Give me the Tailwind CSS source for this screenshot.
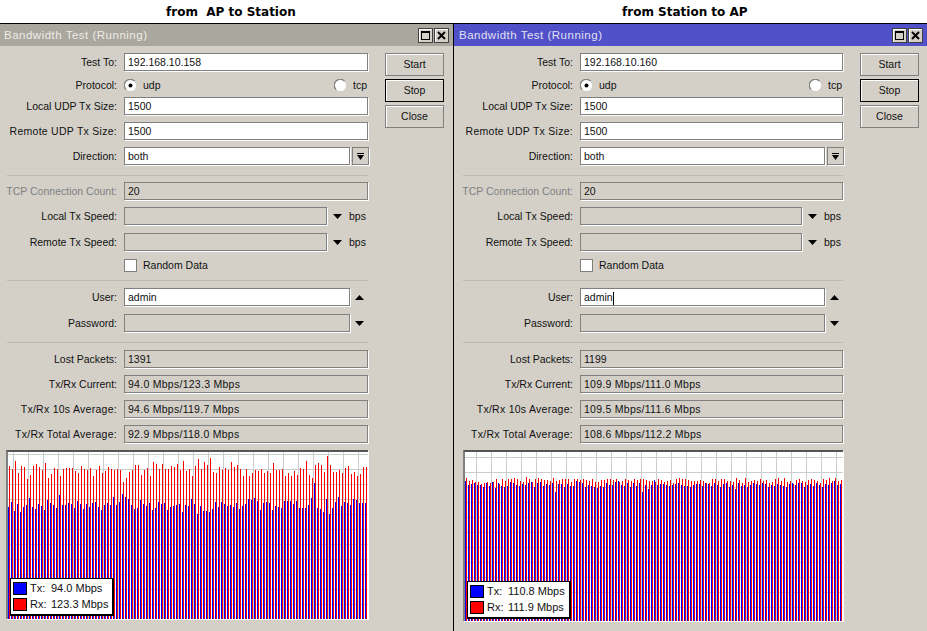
<!DOCTYPE html>
<html lang="en">
<head>
    <meta charset="UTF-8">
    <title>Bandwidth Test</title>
    <script src="https://cdn.jsdelivr.net/npm/@tailwindcss/browser@4"></script>
</head>
<body class="bg-white">
    <div class="w-[927px] h-[631px] overflow-hidden font-['Liberation_Sans',sans-serif] text-[10.5px] text-[#111]">
        <div class="flex h-[23px] items-center pt-px font-['DejaVu_Sans',sans-serif] font-bold text-[12px] text-black">
            <div class="w-[454px] pl-[166px]">from&nbsp; AP to Station</div>
            <div class="pl-[168px]">from Station to AP</div>
        </div>
        <div class="flex h-[608px] border-t border-black bg-[#d4d0c8]">
            <div id="win-left" class="w-[454px] border-r border-black"></div>
            <div id="win-right" class="w-[473px]"></div>
        </div>
    </div>

    <script>
        const down = '<svg class="w-[9px] h-[5px]" viewBox="0 0 9 5"><polygon points="0,0 9,0 4.5,5" fill="#000"/></svg>';
        const up = '<svg class="w-[9px] h-[5px]" viewBox="0 0 9 5"><polygon points="0,5 9,5 4.5,0" fill="#000"/></svg>';

        function radio(on) {
            return `<svg class="w-[13px] h-[13px] shrink-0" viewBox="0 0 13 13">
                <circle cx="6.5" cy="6.5" r="5.5" fill="#fff"/>
                <path d="M2 10.5A5.7 5.7 0 0 1 10.5 2" fill="none" stroke="#808080" stroke-width="1.2"/>
                ${on ? '<circle cx="6.5" cy="6.5" r="2" fill="#000"/>' : ''}
            </svg>`;
        }

        function label(text, w, muted) {
            return `<div class="${w} mr-[7px] pt-[2px] shrink-0 text-right ${muted ? 'text-[#808080]' : ''}">${text}</div>`;
        }

        function wide(text) {
            return `<span class="tracking-[0.27px]">${text}</span>`;
        }

        function input(value, caret) {
            return `<div class="flex-1 h-[18px] flex items-center pl-[3px] pt-[2px] bg-white border border-[#808080] shadow-[1px_1px_0_#fff]">${value}${caret ? '<span class="w-px h-[13px] bg-black"></span>' : ''}</div>`;
        }

        function box(value) {
            return `<div class="flex-1 h-[18px] flex items-center pl-[3px] pt-[2px] border border-[#808080] shadow-[1px_1px_0_#fff]">${value}</div>`;
        }

        function divider(ml, mt, mb) {
            return `<div class="h-px bg-[#bdbab2] ${ml} ${mt} ${mb}"></div>`;
        }

        function titleButton(inner) {
            return `<div class="w-[15px] h-[15px] flex items-center justify-center bg-[#d4d0c8] border border-[#404040] shadow-[inset_1px_1px_0_#fff]">${inner}</div>`;
        }

        function button(text, isDefault) {
            return `<div class="h-[23px] flex items-center justify-center ${isDefault ? 'border border-black' : 'border border-[#808080]'} shadow-[inset_1px_1px_0_#fff]">${text}</div>`;
        }

        function windowHtml(o) {
            const l = o.labelWidth;
            return `
            <div class="h-[22px] flex items-center justify-between ${o.titleClass}">
                <span class="pt-[2px] text-[11.5px] tracking-[0.5px]">Bandwidth Test (Running)</span>
                <div class="flex gap-[1px] mr-[4px]">
                    ${titleButton('<span class="block w-[9px] h-[9px] border border-black border-t-2"></span>')}
                    ${titleButton('<svg class="w-[9px] h-[9px]" viewBox="0 0 9 9"><path d="M1 1l7 7M8 1l-7 7" stroke="#000" stroke-width="2"/></svg>')}
                </div>
            </div>
            <div class="flex pt-[7px]">
                <div class="flex-1">
                    <div class="flex items-center h-[18px]">${label('Test To:', l)}${input(o.ip)}</div>
                    <div class="flex items-center h-[18px] mt-[5px]">${label('Protocol:', l)}
                        ${radio(true)}<span class="ml-[6px] pt-[2px]">udp</span><span class="flex-1"></span>${radio(false)}<span class="ml-[6px] mr-[1px] pt-[2px]">tcp</span>
                    </div>
                    <div class="flex items-center h-[18px] mt-[3px]">${label('Local UDP Tx Size:', l)}${input('1500')}</div>
                    <div class="flex items-center h-[18px] mt-[7px]">${label(wide('Remote UDP Tx Size:'), l)}${input('1500')}</div>
                    <div class="flex items-center h-[18px] mt-[7px]">${label('Direction:', l)}${input('both')}
                        <div class="w-[17px] h-[18px] ml-[2px] mr-[-1px] flex flex-col items-center justify-center gap-px border border-[#808080] shadow-[1px_1px_0_#fff]">
                            <span class="block w-[7px] h-px bg-black"></span>
                            <svg class="w-[7px] h-[5px]" viewBox="0 0 7 5"><polygon points="0,0 7,0 3.5,5" fill="#000"/></svg>
                        </div>
                    </div>
                    ${divider(o.hrMargin, 'mt-[10px]', 'mb-[6px]')}
                    <div class="flex items-center h-[18px]">${label('TCP Connection Count:', l, true)}${box('20')}</div>
                    <div class="flex items-center h-[18px] mt-[7px]">${label('Local Tx Speed:', l)}${box('')}
                        <div class="w-[20px] flex justify-center">${down}</div><span class="w-[21px] pl-[2px] pt-[2px]">bps</span>
                    </div>
                    <div class="flex items-center h-[18px] mt-[8px]">${label('Remote Tx Speed:', l)}${box('')}
                        <div class="w-[20px] flex justify-center">${down}</div><span class="w-[21px] pl-[2px] pt-[2px]">bps</span>
                    </div>
                    <div class="flex items-center h-[18px] mt-[5px]">${label('', l)}
                        <span class="w-[13px] h-[13px] bg-white border border-[#808080]"></span><span class="ml-[6px] pt-[2px]">Random Data</span>
                    </div>
                    ${divider(o.hrMargin, 'mt-[6px]', 'mb-[7px]')}
                    <div class="flex items-center h-[18px]">${label('User:', l)}${input('admin', o.caret)}
                        <div class="w-[18px] flex justify-center">${up}</div>
                    </div>
                    <div class="flex items-center h-[18px] mt-[8px]">${label('Password:', l)}${box('')}
                        <div class="w-[18px] flex justify-center">${down}</div>
                    </div>
                    ${divider(o.hrMargin, 'mt-[10px]', 'mb-[7px]')}
                    <div class="flex items-center h-[18px]">${label('Lost Packets:', l)}${box(o.lost)}</div>
                    <div class="flex items-center h-[18px] mt-[7px]">${label('Tx/Rx Current:', l)}${box(wide(o.current))}</div>
                    <div class="flex items-center h-[18px] mt-[7px]">${label(wide('Tx/Rx 10s Average:'), l)}${box(wide(o.avg10))}</div>
                    <div class="flex items-center h-[18px] mt-[7px]">${label(wide('Tx/Rx Total Average:'), l)}${box(wide(o.avgTotal))}</div>
                    <div class="relative mt-[7px] ${o.chartClass} border-t-2 border-l-2 border-t-[#555] border-l-[#808080] bg-white shadow-[1px_1px_0_#fff]">
                        <svg id="${o.chartId}" class="block w-full h-full" shape-rendering="crispEdges"></svg>
                        <div class="absolute ${o.legendClass} w-[104px] h-[38px] flex flex-col justify-center gap-[3px] pl-[2px] bg-white border border-black border-r-2 border-b-2 text-[11px]">
                            <div class="flex items-center h-[13px]"><span class="w-[14px] h-[13px] bg-[#0000ff] border border-black mr-[3px]"></span><span class="w-[21px]">Tx:</span>${o.tx}</div>
                            <div class="flex items-center h-[13px]"><span class="w-[14px] h-[13px] bg-[#ff0000] border border-black mr-[3px]"></span><span class="w-[21px]">Rx:</span>${o.rx}</div>
                        </div>
                    </div>
                </div>
                <div class="w-[59px] ml-[17px] ${o.buttonsMargin} flex flex-col gap-[3px]">
                    ${button('Start')}${button('Stop', true)}${button('Close')}
                </div>
            </div>`;
        }

        document.getElementById('win-left').innerHTML = windowHtml({
            labelWidth: 'w-[117px]', titleClass: 'bg-[#aaa79e] text-[#eeece6] pl-[4px]', hrMargin: 'ml-[7px]', buttonsMargin: 'mr-[9px]',
            ip: '192.168.10.158', lost: '1391', current: '94.0 Mbps/123.3 Mbps', avg10: '94.6 Mbps/119.7 Mbps', avgTotal: '92.9 Mbps/118.0 Mbps',
            chartClass: 'ml-[6px] h-[169px]', legendClass: 'left-[2px] top-[126px]', chartId: 'chart-left', tx: '94.0 Mbps', rx: '123.3 Mbps'
        });
        document.getElementById('win-right').innerHTML = windowHtml({
            labelWidth: 'w-[119px]', titleClass: 'bg-[#5050c8] text-[#e0e0f4] pl-[5px]', hrMargin: 'ml-[9px]', buttonsMargin: 'mr-[8px]', caret: true,
            ip: '192.168.10.160', lost: '1199', current: '109.9 Mbps/111.0 Mbps', avg10: '109.5 Mbps/111.6 Mbps', avgTotal: '108.6 Mbps/112.2 Mbps',
            chartClass: 'ml-[9px] h-[171px]', legendClass: 'left-[2px] top-[129px]', chartId: 'chart-right', tx: '110.8 Mbps', rx: '111.9 Mbps'
        });

        // bar tops as read off the 3x crops of the graphs (crop starts at y=445)
        const leftRx = [63,72,48,84,63,66,102,90,63,57,66,75,54,99,87,69,72,93,72,69,69,69,78,84,63,72,75,69,93,75,63,84,78,66,72,75,72,75,111,
            99,81,75,60,60,90,75,69,93,51,57,72,57,72,72,63,66,57,75,48,78,72,93,63,42,72,51,60,39,81,84,66,75,69,75,51,66,60,72,93,72,93,
            84,75,78,72,84,78,84,54,75,75,72,93,84,93,78,90,69,72,48,90,99,60,54,60,81,33,60,81,81,75,84,69,63,87,81,93,87,66,66];
        const leftTx = [186,171,198,177,201,186,180,159,186,192,177,183,195,165,174,180,189,150,180,180,174,177,189,168,177,192,177,186,174,171,186,195,180,174,180,156,180,171,147,
            156,162,180,192,189,165,177,183,174,195,189,171,177,174,195,186,183,180,177,201,180,183,162,177,207,183,198,198,201,192,171,186,171,177,183,180,186,174,192,183,177,162,
            165,159,168,195,174,171,174,195,183,186,189,168,168,168,177,168,189,189,189,180,159,114,189,192,201,162,207,189,171,156,183,171,174,180,162,165,174,174,174,174];
        const rightRx = [99,108,105,111,111,117,114,111,114,111,102,117,102,108,102,102,99,102,108,111,96,102,111,102,99,102,105,105,108,99,108,105,102,102,102,111,102,102,105,102,
            105,108,102,111,111,105,105,102,102,105,102,111,108,102,105,108,102,105,102,102,105,108,108,111,102,105,111,108,105,114,102,99,102,102,105,108,108,108,105,108,114,114,102,102,108,102,102,108,108,111,99,105,114,99,111,108,105,108,102,108,105,114,111,102,99,108,99,111,108,117,
            105,102,108,111,105,102,105,108,114,102,105,99,108];
        const rightTx = [108,120,117,114,120,120,126,114,123,111,129,114,123,126,123,111,114,120,123,117,120,114,111,126,114,111,123,117,120,114,141,117,117,126,117,123,123,108,111,114,
            126,120,123,126,129,123,126,114,120,120,111,108,120,123,114,126,114,123,114,141,120,132,120,105,120,117,117,120,123,120,117,114,120,123,123,126,120,117,117,123,114,117,123,114,120,126,117,114,126,120,132,114,123,120,126,120,114,117,120,114,117,126,120,123,117,120,123,126,117,114,
            120,114,114,126,120,117,123,114,120,126,117,120,114];

        function drawChart(id, w, h, gridX, gridY, count, rx, tx) {
            const svg = document.getElementById(id);
            let out = '';
            for (let x = gridX; x < w; x += 15) out += `<rect x="${x}" y="0" width="1" height="${h}" fill="#cccccc"/>`;
            for (let y = gridY; y < h; y += 15) out += `<rect x="0" y="${y}" width="${w}" height="1" fill="#cccccc"/>`;
            for (let i = 0; i < count; i++) {
                const x = i * 3;
                const rTop = Math.round(rx[i % rx.length] / 3) - 7;
                const tTop = Math.round(tx[i % tx.length] / 3) - 7;
                out += `<rect x="${x}" y="${tTop}" width="1" height="${h - tTop}" fill="#0000ff"/>`;
                out += `<rect x="${x + 1}" y="${rTop}" width="1" height="${h - rTop}" fill="#ff0000"/>`;
            }
            svg.setAttribute('viewBox', `0 0 ${w} ${h}`);
            svg.innerHTML = out;
        }
        drawChart('chart-left', 360, 167, 5, 2, 120, leftRx, leftTx);
        drawChart('chart-right', 378, 169, 11, 5, 126, rightRx, rightTx);
    </script>
</body>
</html>
